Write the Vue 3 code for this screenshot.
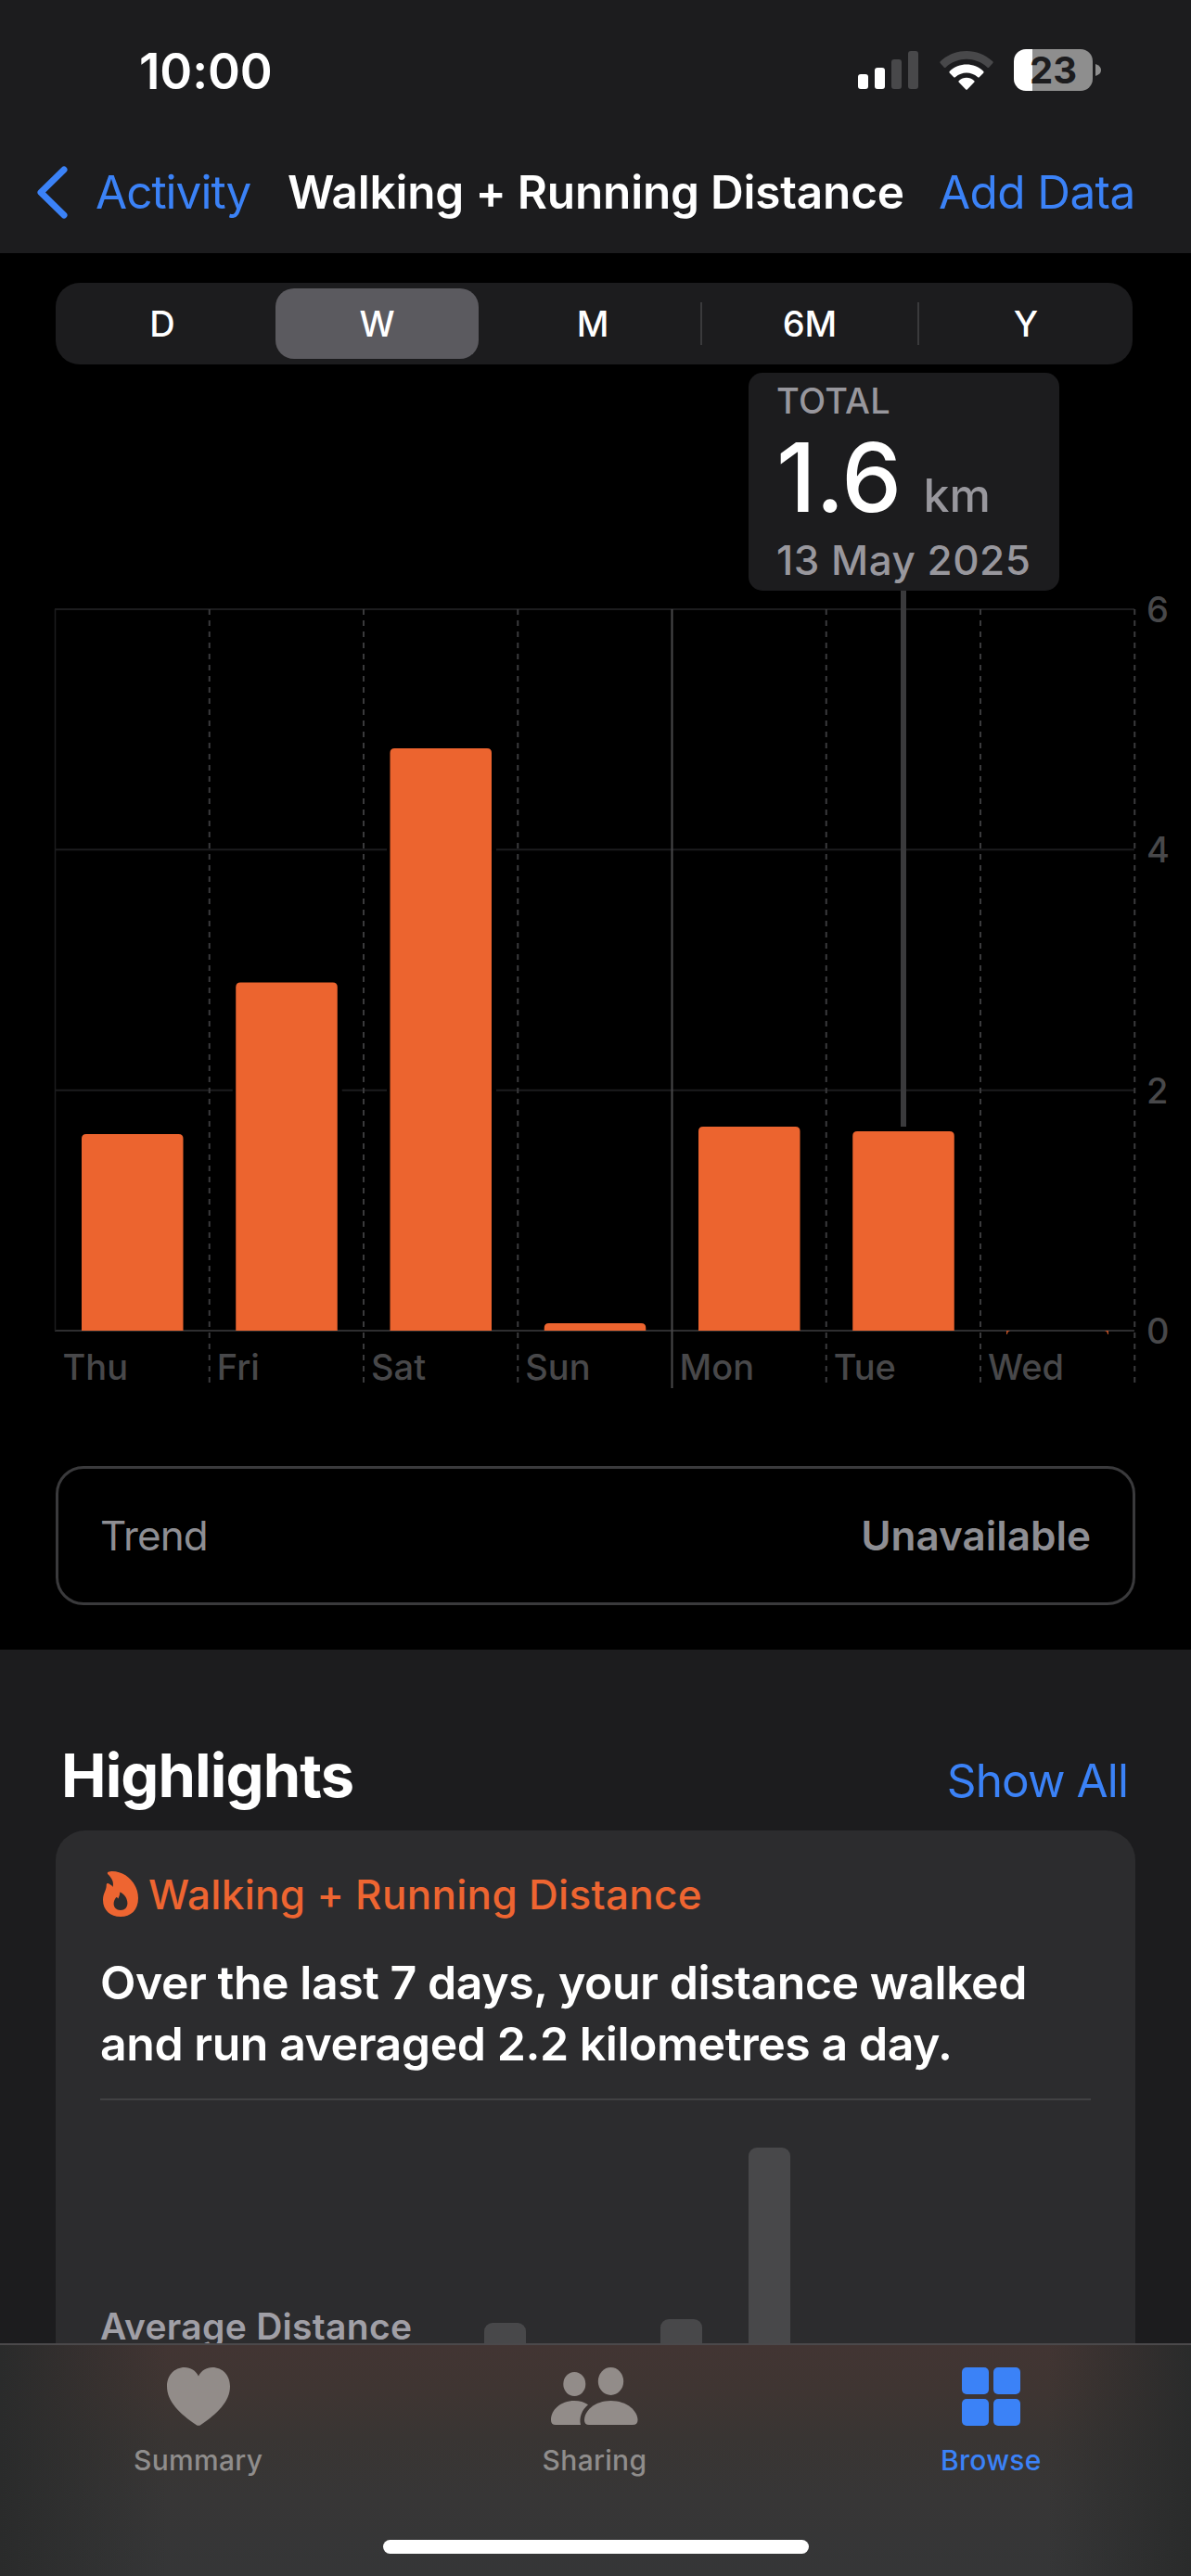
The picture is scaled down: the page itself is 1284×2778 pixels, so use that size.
<template>
  <div class="screen">
    <header class="top">
      <div class="status-bar">
        <div class="time">10:00</div>
        <div class="status-icons">
          <svg class="signal" width="65" height="41" viewBox="0 0 65 41">
            <rect x="0" y="25" width="11" height="16" rx="3" fill="#fff" />
            <rect x="18" y="18" width="11" height="23" rx="3" fill="#fff" />
            <rect x="36" y="9" width="11" height="32" rx="3" fill="#48484a" />
            <rect x="54" y="0" width="11" height="41" rx="3" fill="#48484a" />
          </svg>
          <svg class="wifi" width="58" height="42" viewBox="0 0 58 42">
            <path d="M0.8 13.2 Q-0.2 12.1 1 11 C17 -3.6 41 -3.6 57 11 Q58.2 12.1 57.2 13.2 L53.4 17.4 Q52.3 18.4 51.2 17.4 C38 6 20 6 6.8 17.4 Q5.7 18.4 4.6 17.4 Z" fill="#48484a" />
            <path d="M10.8 23.7 Q9.8 22.7 10.9 21.7 C21 12 37 12 47.1 21.7 Q48.2 22.7 47.2 23.7 L43 28 Q42 29 40.9 28 C34 22 24 22 17.1 28 Q16 29 15 28 Z" fill="#fff" />
            <path d="M20.8 33.8 Q19.8 32.8 20.9 31.9 C25.5 27.7 32.5 27.7 37.1 31.9 Q38.2 32.8 37.2 33.8 L30 41.2 Q29 42.2 28 41.2 Z" fill="#fff" />
          </svg>
          <div class="battery">
            <div class="battery-body"><span>23</span></div>
            <svg width="6" height="13" viewBox="0 0 6 13"><path d="M0 0 Q6 2 6 6.5 Q6 11 0 13 Z" fill="#8e8e8e" /></svg>
          </div>
        </div>
      </div>
      <nav class="nav-bar">
        <svg class="chevron" width="34" height="57" viewBox="0 0 34 57">
          <path d="M30 4 L5 28.5 L30 53" fill="none" stroke="#3b82f7" stroke-width="7" stroke-linecap="round" stroke-linejoin="round" />
        </svg>
        <a class="back">Activity</a>
        <h1 class="nav-title">Walking + Running Distance</h1>
        <a class="add">Add Data</a>
      </nav>
    </header>

    <section class="chart-section">
      <div class="segments">
        <button
          v-for="r in ranges"
          :key="r"
          class="segment"
          :class="{ active: r === range, divided: r === '6M' || r === 'Y' }"
          @click="range = r"
        >{{ r }}</button>
      </div>

      <div class="chart">
        <svg width="1284" height="1112" viewBox="0 393 1284 1112">
          <line v-for="v in ticks" :key="'h' + v" x1="59" x2="1223" :y1="yOf(v)" :y2="yOf(v)" :stroke="v === 0 ? '#2e2e30' : '#1c1c1e'" stroke-width="2" />
          <line x1="59.5" x2="59.5" y1="657" y2="1435" stroke="#1c1c1e" stroke-width="1.5" />
          <line
            v-for="i in 7"
            :key="'v' + i"
            :x1="xOf(i)"
            :x2="xOf(i)"
            y1="657"
            y2="1497"
            :stroke="i === 4 ? '#48484a' : '#3a3a3c'"
            stroke-width="2"
            :stroke-dasharray="i === 4 ? 'none' : '6 6'"
          />
          <template v-for="(d, i) in days" :key="d.name">
            <rect v-if="d.km" :x="xOf(i) + 25" :y="yOf(d.km) - 4" width="118" :height="yOf(0) - yOf(d.km) + 3" fill="#000" />
            <path v-if="d.km" :d="barPath(i, d.km)" fill="#ec642f" />
            <text class="axis" :x="xOf(i) + 8" y="1488">{{ d.name }}</text>
          </template>
          <path d="M1085 1435 h4 q-3 1 -3 4 h-1 Z M1195 1435 h-4 q3 1 3 4 h1 Z" fill="#b94f27" />
          <text v-for="v in ticks" :key="'t' + v" class="axis" x="1236" :y="yOf(v) + 14">{{ v }}</text>
          <line x1="974" x2="974" y1="637" y2="1215" stroke="#3a3a3c" stroke-width="6" />
        </svg>
        <div class="callout">
          <div class="callout-label">TOTAL</div>
          <div class="callout-value">1.6<span>km</span></div>
          <div class="callout-date">13 May 2025</div>
        </div>
      </div>

      <div class="trend">
        <span>Trend</span>
        <b>Unavailable</b>
      </div>
    </section>

    <main class="highlights">
      <div class="highlights-head">
        <h2>Highlights</h2>
        <a>Show All</a>
      </div>
      <div class="card">
        <div class="card-title">
          <svg width="38" height="49" viewBox="0 0 38 49">
            <path fill-rule="evenodd" d="M8 0.2 C23 -1 38 12 38 29 C38 42 30 49 19 49 C8 49 0 42 0 31 C0 24 4 20 3.7 15 C3.7 12.5 5.5 12.5 7 13.7 C9 15 10.2 16 10.6 17 C12 11 9 7 5.6 3.6 C4 1.8 5 0.3 8 0.2 Z M18.3 22.4 C18.3 26 16.8 28 16.4 29.6 C15.5 28.5 15 27.8 14.2 28.2 C12.5 30 11.6 32.5 11.6 35 C11.6 39 14.5 42 19 42 C23.6 42 26.4 39 26.4 34.5 C26.4 29 23 24.3 18.3 22.4 Z" fill="#ee6531" />
          </svg>
          <span>Walking + Running Distance</span>
        </div>
        <p class="card-text">Over the last 7 days, your distance walked<br>and run averaged 2.2 kilometres a day.</p>
        <div class="card-chart">
          <div class="average">Average Distance</div>
          <div class="mini-bars">
            <i v-for="(h, i) in miniBars" :key="i" :style="{ height: h + 'px' }"></i>
          </div>
        </div>
      </div>
    </main>

    <footer class="tab-bar">
      <div class="tabs">
        <div class="tab">
          <svg width="68" height="63" viewBox="0 0 68 63">
            <path d="M34 9.5 C31 3.5 25.5 0 19 0 C8 0 0 8.7 0 20.5 C0 37 14 50 31.5 62 Q34 63.7 36.5 62 C54 50 68 37 68 20.5 C68 8.7 60 0 49 0 C42.5 0 37 3.5 34 9.5 Z" fill="#928c89" />
          </svg>
          <span>Summary</span>
        </div>
        <div class="tab">
          <svg width="94" height="63" viewBox="0 0 94 63">
            <g fill="#928c89">
              <ellipse cx="25.3" cy="18" rx="12" ry="13" />
              <ellipse cx="64.5" cy="15" rx="13.7" ry="15" />
              <path d="M25.3 36 C31 36 36 37.5 40 40.2 C33.5 45.5 30 54 32 62 H5 Q0 62 0 57 C0 46 10 36 25.3 36 Z" />
              <path d="M64.5 36 C82 36 93.5 47 93.5 57 Q93.5 62 88 62 H41 Q36 62 36 57 C36 47 47 36 64.5 36 Z" />
            </g>
          </svg>
          <span>Sharing</span>
        </div>
        <div class="tab active">
          <svg width="63" height="63" viewBox="0 0 63 63">
            <g fill="#3b82f7">
              <rect width="29" height="29" rx="5" />
              <rect x="34" width="29" height="29" rx="5" />
              <rect y="34" width="29" height="29" rx="5" />
              <rect x="34" y="34" width="29" height="29" rx="5" />
            </g>
          </svg>
          <span>Browse</span>
        </div>
      </div>
      <div class="home-indicator"></div>
    </footer>
  </div>
</template>

<script setup>
import { ref } from 'vue'

const ranges = ['D', 'W', 'M', '6M', 'Y']
const range = ref('W')

const ticks = [6, 4, 2, 0]
const days = [
  { name: 'Thu', km: 1.635 },
  { name: 'Fri', km: 2.896 },
  { name: 'Sat', km: 4.843 },
  { name: 'Sun', km: 0.062 },
  { name: 'Mon', km: 1.697 },
  { name: 'Tue', km: 1.658 },
  { name: 'Wed', km: 0 }
]
const miniBars = [23, 0, 27, 212]

function xOf(i) {
  return 59.5 + i * 166.25
}

function yOf(km) {
  return 1435 - km * (778 / 6)
}

// column with rounded top corners only
function barPath(i, km) {
  const x = xOf(i) + 28.5
  const top = yOf(km)
  return `M${x} 1435 V${top + 5} q0 -5 5 -5 H${x + 104.5} q5 0 5 5 V1435 Z`
}
</script>

<style>
body { background: #1c1c1e; }
</style>

<style scoped>
.screen {
  width: 1284px;
  height: 2778px;
  display: flex;
  flex-direction: column;
  overflow: hidden;
  background: #1c1c1e;
  color: #fff;
  font-family: Inter, "Liberation Sans", sans-serif;
}
h1, h2, p { margin: 0; }
a { color: #3b82f7; }

.top { height: 273px; flex: none; }
.status-bar {
  height: 151px;
  box-sizing: border-box;
  padding: 0 97px 0 150px;
  display: flex;
  justify-content: space-between;
  align-items: center;
}
.time { font-size: 53px; font-weight: 600; letter-spacing: -0.1px; line-height: 64px; margin-top: 3px; }
.status-icons { display: flex; align-items: center; }
.wifi { margin-left: 23px; }
.battery { display: flex; align-items: center; gap: 3px; margin-left: 22px; }
.battery-body {
  width: 85px;
  height: 45px;
  border-radius: 13px;
  background: linear-gradient(90deg, #fff 20px, #8e8e8e 20px);
  color: #1c1c1e;
  font-size: 40px;
  font-weight: 700;
  line-height: 45px;
  text-align: center;
}
.nav-bar {
  height: 112px;
  display: flex;
  align-items: center;
  font-size: 49.5px;
  line-height: 60px;
  white-space: nowrap;
}
.chevron { margin-left: 39px; flex: none; }
.back { width: 207px; margin-left: 30px; letter-spacing: -1px; }
.nav-title { width: 702px; font-size: 49.5px; font-weight: 600; letter-spacing: -0.2px; }
.add { letter-spacing: -0.6px; }

.chart-section { height: 1506px; flex: none; background: #000; overflow: hidden; }
.segments {
  width: 1161px;
  height: 88px;
  margin: 32px 0 0 60px;
  border-radius: 26px;
  background: #1c1c1e;
  display: grid;
  grid-template-columns: 230px 233px 232px 234px 232px;
  align-items: center;
}
.segment {
  height: 76px;
  margin: 0 7px;
  padding: 0;
  border: 0;
  border-radius: 20px;
  background: none;
  color: #fff;
  font: 500 38px/76px Inter, sans-serif;
}
.segment.active { background: #5b5a5f; }
.segment.divided {
  margin: 0;
  height: 46px;
  line-height: 46px;
  border-left: 2px solid #3a3a3c;
  border-radius: 0;
}
.chart { position: relative; height: 1112px; }
.chart svg { display: block; }
.axis { font-size: 38px; font-weight: 500; fill: #48484a; }
.callout {
  position: absolute;
  left: 807px;
  top: 9px;
  width: 335px;
  height: 235px;
  box-sizing: border-box;
  padding: 9px 0 0 30px;
  border-radius: 15px;
  background: #1c1c1e;
  color: #98979d;
  font-weight: 500;
  white-space: nowrap;
}
.callout-label { font-size: 38px; line-height: 42px; letter-spacing: 0.3px; }
.callout-value { font-size: 103px; line-height: 104px; color: #fff; margin-top: 10px; letter-spacing: -0.5px; }
.callout-value span { font-size: 50px; color: #98979d; margin-left: 24px; letter-spacing: 0; }
.callout-date { font-size: 44px; line-height: 52px; margin-top: -8px; letter-spacing: 0.5px; }
.trend {
  width: 1164px;
  height: 150px;
  box-sizing: border-box;
  margin: 76px 0 0 60px;
  padding: 0 45px 0 45px;
  border: 3px solid #3a3a3c;
  border-radius: 30px;
  display: flex;
  justify-content: space-between;
  align-items: center;
  font-size: 44px;
  color: #8e8e93;
}
.trend span { letter-spacing: -0.9px; }
.trend b { font-weight: 600; }

.highlights { flex: 1; min-height: 0; overflow: hidden; }
.highlights-head {
  height: 195px;
  box-sizing: border-box;
  padding: 96px 68px 0 66px;
  display: flex;
  justify-content: space-between;
  align-items: baseline;
}
.highlights-head h2 { font-size: 65px; font-weight: 700; line-height: 80px; letter-spacing: -0.9px; }
.highlights-head a { font-size: 49.5px; letter-spacing: -0.9px; }
.card {
  width: 1164px;
  height: 700px;
  box-sizing: border-box;
  margin-left: 60px;
  padding: 41px 48px 0;
  border-radius: 32px;
  background: #2c2c2e;
}
.card-title {
  height: 54px;
  display: flex;
  align-items: center;
  gap: 11px;
  padding-left: 3px;
  color: #ee6531;
  font-size: 44px;
  font-weight: 500;
  letter-spacing: 0.3px;
  white-space: nowrap;
}
.card-title span { padding-top: 2px; }
.card-text {
  margin-top: 36px;
  height: 160px;
  box-sizing: border-box;
  border-bottom: 2px solid #414143;
  font-size: 50px;
  font-weight: 600;
  line-height: 66px;
  letter-spacing: -0.45px;
  white-space: nowrap;
}
.card-chart { display: flex; height: 263px; align-items: flex-end; }
.average {
  width: 414px;
  margin-bottom: -5px;
  font-size: 39px;
  font-weight: 600;
  line-height: 48px;
  letter-spacing: 0.3px;
  color: #a09fa6;
  white-space: nowrap;
}
.mini-bars { display: flex; gap: 50px; align-items: flex-end; }
.mini-bars i { width: 45px; border-radius: 9px 9px 0 0; background: #48484a; }

.tab-bar {
  height: 251px;
  flex: none;
  box-sizing: border-box;
  border-top: 2px solid #4b494b;
  background:
    linear-gradient(90deg, #2a2b2b 0, rgba(42, 43, 43, 0) 14%, rgba(42, 43, 43, 0) 88%, #2a2b2b 100%),
    linear-gradient(180deg, #423533 0, #3f3532 18%, #393533 40%, #373636 65%, #353637 100%);
}
.tabs { display: grid; grid-template-columns: repeat(3, 1fr); height: 210px; padding-right: 2px; }
.tab {
  display: flex;
  flex-direction: column;
  align-items: center;
  padding-top: 24px;
  font-size: 30px;
  font-weight: 500;
  color: #8f8d8c;
}
.tab span { margin-top: 18px; line-height: 38px; letter-spacing: 0.3px; }
.tab.active { color: #3b82f7; }
.home-indicator { width: 459px; height: 15px; border-radius: 8px; background: #fff; margin-left: 413px; }
</style>
